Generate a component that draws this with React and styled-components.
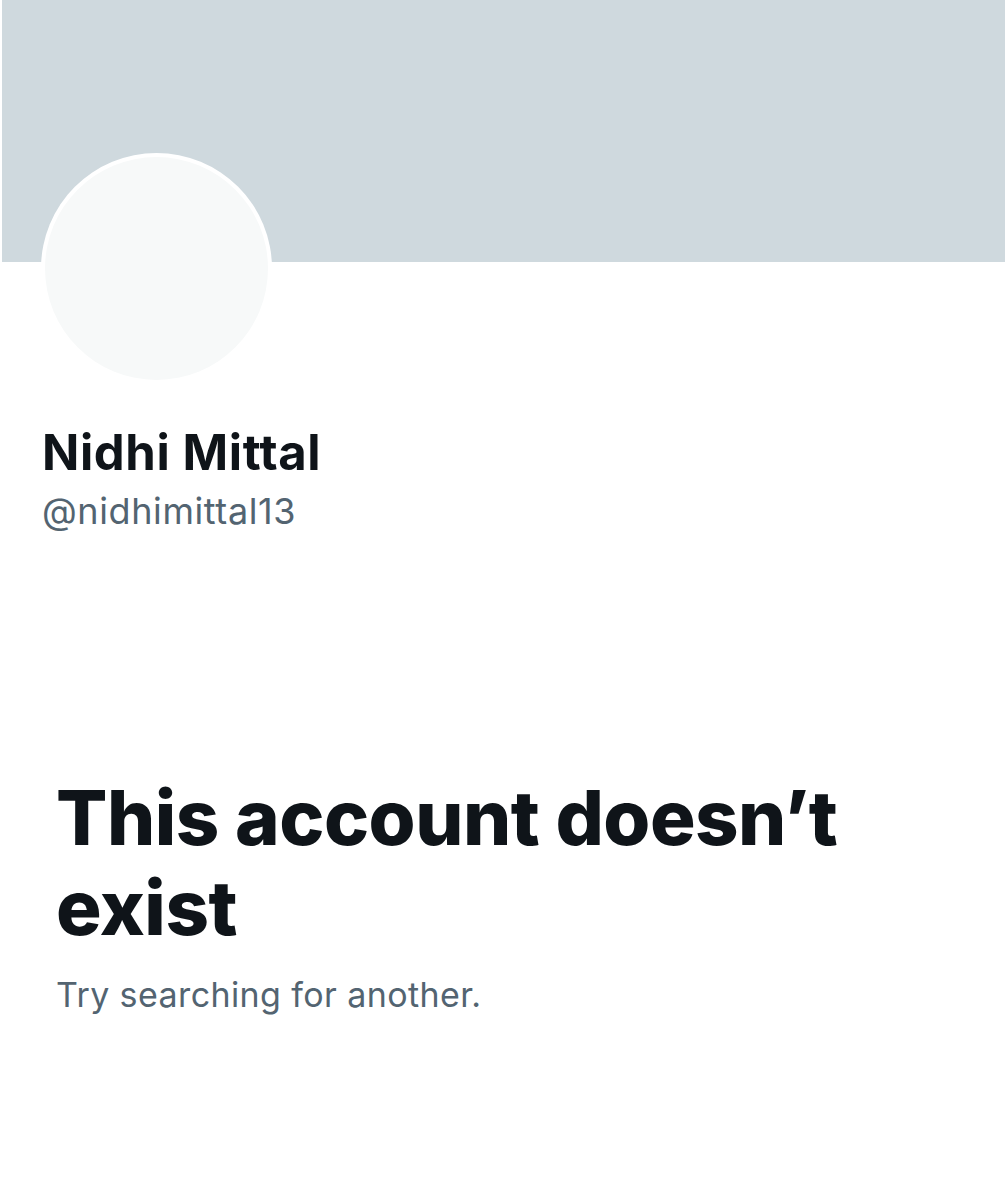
import styled, { createGlobalStyle } from "styled-components";

const GlobalStyle = createGlobalStyle`
	html, body {
		margin: 0;
		padding: 0;
		background: #ffffff;
	}
	body {
		font-family: "Inter", "Noto Sans", sans-serif;
		color: #0f1419;
	}
`;

const Page = styled.div`
	width: 1007px;
	min-height: 1200px;
	background: #fff;
`;

const Banner = styled.div`
	height: 262px;
	margin: 0 2px;
	background-color: #cfd9de;
`;

const ProfileHeader = styled.div`
	padding-left: 41px;
`;

const AvatarRing = styled.div`
	width: 231px;
	height: 231px;
	margin-top: -109px;
	padding: 4px;
	box-sizing: border-box;
	border-radius: 50%;
	background: #fff;
`;

const AvatarFace = styled.div`
	width: 100%;
	height: 100%;
	border-radius: 50%;
	background: #f7f9f9;
`;

const Name = styled.h1`
	margin: 39px 0 0 1px;
	font-size: 49px;
	line-height: 60px;
	font-weight: 700;
	letter-spacing: 0.6px;
	color: #0f1419;
`;

const Handle = styled.div`
	margin: 6px 0 0 1px;
	font-size: 36px;
	line-height: 44px;
	font-weight: 400;
	letter-spacing: 0.6px;
	color: #536471;
`;

const EmptyState = styled.div`
	padding: 239px 0 0 56px;
	max-width: 820px;
`;

const Title = styled.h2`
	margin: 0;
	font-size: 76px;
	line-height: 90px;
	font-weight: 800;
	letter-spacing: -0.5px;
	color: #0f1419;
`;

const Subtitle = styled.p`
	margin: 21px 0 0;
	font-size: 34px;
	line-height: 44px;
	font-weight: 400;
	letter-spacing: 0.4px;
	color: #536471;
`;

export default function App() {
	return (
		<>
			<GlobalStyle />
			<Page>
				<Banner />
				<ProfileHeader>
					<AvatarRing>
						<AvatarFace />
					</AvatarRing>
					<Name>Nidhi Mittal</Name>
					<Handle>@nidhimittal13</Handle>
				</ProfileHeader>
				<EmptyState>
					<Title>This account doesn’t exist</Title>
					<Subtitle>Try searching for another.</Subtitle>
				</EmptyState>
			</Page>
		</>
	);
}
